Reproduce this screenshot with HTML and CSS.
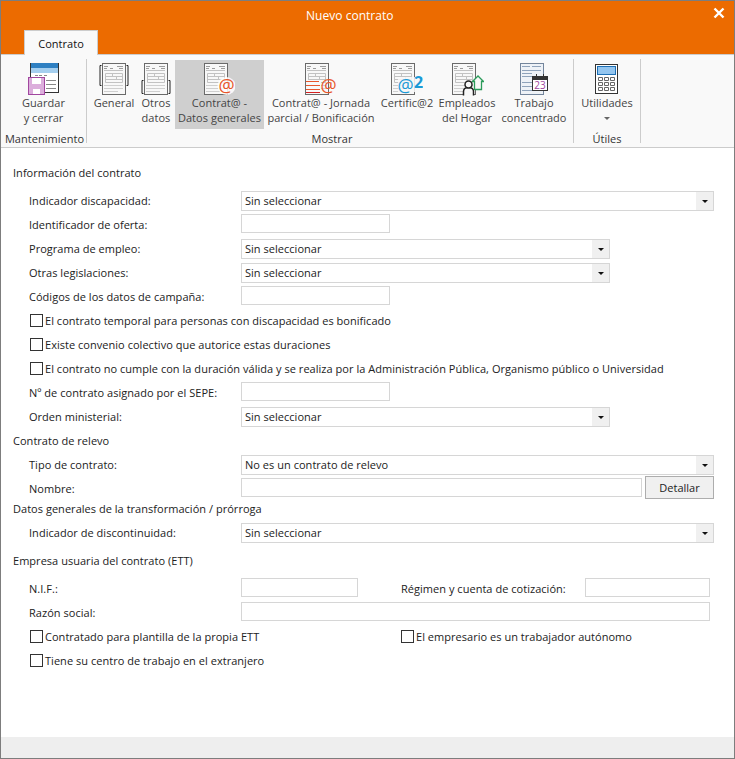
FILE: index.html

```html
<!DOCTYPE html>
<html lang="es">
<head>
  <meta charset="UTF-8">
  <title>Nuevo contrato</title>
  <link rel="stylesheet" href="styles.css">
</head>
<body>

  <svg class="defs" width="0" height="0">
    <symbol id="doc" viewBox="0 0 24 32">
      <rect x="0.5" y="0.5" width="23" height="31" fill="#f8f8f8" stroke="#6a6a6a"/>
      <path d="M2 3.5h4M15 3.5h6M2 5.500h3M8 5.500h3M17 5.500h4" stroke="#9c9c9c" fill="none"/>
      <path d="M2 7.500h19M3.500 10.500h17v9h-17zM3.500 13.500h17M3.500 16.500h17M10.500 10.500v3M14.500 13.500v3" stroke="#c2c2c2" fill="none"/>
      <path d="M2 22.500h19M2 25.500h19M2 28.500h14" stroke="#cfcfcf" fill="none"/>
    </symbol>
  </svg>

  <div class="window">
    <div class="titlebar">
      <span class="title">Nuevo contrato</span>
      <svg class="close" width="12" height="12" viewBox="0 0 12 12"><path d="M1.5 1.500l9 9M10.500 1.500l-9 9" stroke="#fff" stroke-width="2.400"/></svg>
    </div>
    <div class="tabs">
      <div class="tab">Contrato</div>
    </div>

    <div class="ribbon">
      <div class="group group-save">
        <div class="group-buttons">
          <div class="rbtn w-save">
            <svg width="33" height="34" viewBox="-1 0 33 34">
              <rect x="2.500" y="1.500" width="28" height="29" fill="#fff" stroke="#333"/>
              <rect x="3" y="1" width="27" height="5" fill="#2f80c2"/>
              <rect x="3" y="6" width="27" height="5" fill="#a5cfef"/>
              <path d="M7 13.500h3M11 13.500h3M16 13.500h3M18 18.500h10M18 22.500h10M18 26.500h10" stroke="#888"/>
              <rect x="0.500" y="15.500" width="16" height="17" fill="#dcaedc" stroke="#a1479f"/>
              <rect x="4" y="16" width="9" height="6" fill="#fff"/>
              <rect x="5" y="27" width="7" height="5" fill="#fff"/>
            </svg>
            <span>Guardar<br>y cerrar</span>
          </div>
        </div>
        <div class="group-label">Mantenimiento</div>
      </div>

      <div class="group group-show">
        <div class="group-buttons">
          <div class="rbtn w-general">
            <svg width="30" height="34" viewBox="0 0 30 34">
              <use href="#doc" x="3" y="1" width="24" height="32"/>
              <path d="M2.500 3.500h-1.500v20h1.500M27.500 3.500h1.500v20h-1.500" stroke="#222" fill="none"/>
            </svg>
            <span>General</span>
          </div>
          <div class="rbtn w-otros">
            <svg width="30" height="34" viewBox="0 0 30 34">
              <use href="#doc" x="3" y="1" width="24" height="32"/>
              <path d="M2.500 18.500h-1.500v13h1.500M27.500 18.500h1.500v13h-1.500" stroke="#222" fill="none"/>
            </svg>
            <span>Otros<br>datos</span>
          </div>
          <div class="rbtn w-datos active">
            <svg width="31" height="34" viewBox="0 0 31 34">
              <use href="#doc" x="0" y="1" width="24" height="32"/>
              <circle cx="22.500" cy="24" r="9" fill="#fff" fill-opacity="0.850"/>
              <text class="at" x="14.500" y="29.500" fill="#e8562a">@</text>
            </svg>
            <span>Contrat@ -<br>Datos generales</span>
          </div>
          <div class="rbtn w-jornada">
            <svg width="32" height="34" viewBox="0 0 32 34">
              <use href="#doc" x="0" y="1" width="24" height="32"/>
              <rect x="1" y="18" width="15" height="14" fill="#f8f8f8"/>
              <path d="M1 19.500h13M1 23.500h14M1 27.500h14" stroke="#e8562a"/>
              <path d="M1 30.500h14" stroke="#d42020"/>
              <text class="at" x="15.500" y="29.500" fill="#e8562a">@</text>
            </svg>
            <span>Contrat@ - Jornada<br>parcial / Bonificación</span>
          </div>
          <div class="rbtn w-certifica">
            <svg width="32" height="34" viewBox="0 0 32 34">
              <use href="#doc" x="0" y="1" width="24" height="32"/>
              <rect x="7" y="15" width="24" height="15" fill="#f8f8f8" fill-opacity="0.850"/>
              <text class="at" x="6.500" y="29.500" fill="#1b9ad6">@</text>
              <text class="two" x="23" y="26" fill="#1b9ad6">2</text>
            </svg>
            <span>Certific@2</span>
          </div>
          <div class="rbtn w-hogar">
            <svg width="34" height="34" viewBox="-2 0 34 34">
              <use href="#doc" x="0" y="1" width="24" height="32"/>
              <path d="M20.500 19.500l5.500-5.500 5.500 5.500h-2v8h-7v-8z" fill="#f8f8f8" stroke="#2c9b5a" stroke-width="1.300"/>
              <path d="M11.500 33.500v-4c0-3 2-4 5-4s5 1 5 4v4" fill="#f8f8f8" stroke="#222" stroke-width="1.500"/>
              <circle cx="16.500" cy="22.500" r="3.500" fill="#f8f8f8" stroke="#222" stroke-width="1.500"/>
            </svg>
            <span>Empleados<br>del Hogar</span>
          </div>
          <div class="rbtn w-trabajo">
            <svg width="30" height="34" viewBox="-1 0 30 34">
              <rect x="0.500" y="1.500" width="23" height="31" fill="#eef2f7" stroke="#73859c"/>
              <path d="M2 4.500h8M12 4.500h9M2 8.500h19M2 11.500h10M2 14.500h10M2 20.500h10M2 24.500h19M2 28.500h19" stroke="#8fa3bb"/>
              <rect x="12.500" y="14.500" width="15" height="14" fill="#fff" stroke="#333"/>
              <rect x="12" y="14" width="16" height="4" fill="#333"/>
              <path d="M16.500 12v3M23.500 12v3" stroke="#333"/>
              <text class="cal" x="20" y="27" fill="#a1479f">23</text>
            </svg>
            <span>Trabajo<br>concentrado</span>
          </div>
        </div>
        <div class="group-label">Mostrar</div>
      </div>

      <div class="group group-tools">
        <div class="group-buttons">
          <div class="rbtn w-utils">
            <svg width="24" height="34" viewBox="0 0 24 34">
              <rect x="0.500" y="2.500" width="22" height="29" fill="#fff" stroke="#333"/>
              <rect x="2.500" y="4.500" width="18" height="8" fill="#93c5ef" stroke="#1c6fb5"/>
              <path d="M3.500 15.500h4v3h-4zM9.500 15.500h4v3h-4zM15.500 15.500h4v3h-4zM3.500 20.500h4v3h-4zM9.500 20.500h4v3h-4zM15.500 20.500h4v3h-4zM3.500 25.500h4v3h-4zM9.500 25.500h4v3h-4zM15.500 25.500h4v3h-4z" fill="none" stroke="#666"/>
            </svg>
            <span>Utilidades</span>
            <i class="ribbon-arrow"></i>
          </div>
        </div>
        <div class="group-label">Útiles</div>
      </div>
    </div>

    <div class="content">
      <div class="section first">Información del contrato</div>

      <div class="row"><label>Indicador discapacidad:</label>
        <div class="select full"><span>Sin seleccionar</span><i></i></div></div>
      <div class="row"><label>Identificador de oferta:</label>
        <input type="text" class="input short"></div>
      <div class="row"><label>Programa de empleo:</label>
        <div class="select mid"><span>Sin seleccionar</span><i></i></div></div>
      <div class="row"><label>Otras legislaciones:</label>
        <div class="select mid"><span>Sin seleccionar</span><i></i></div></div>
      <div class="row"><label>Códigos de los datos de campaña:</label>
        <input type="text" class="input short"></div>
      <div class="check-row"><input type="checkbox" class="check"><span>El contrato temporal para personas con discapacidad es bonificado</span></div>
      <div class="check-row"><input type="checkbox" class="check"><span>Existe convenio colectivo que autorice estas duraciones</span></div>
      <div class="check-row"><input type="checkbox" class="check"><span>El contrato no cumple con la duración válida y se realiza por la Administración Pública, Organismo público o Universidad</span></div>
      <div class="row"><label>Nº de contrato asignado por el SEPE:</label>
        <input type="text" class="input short"></div>
      <div class="row"><label>Orden ministerial:</label>
        <div class="select mid"><span>Sin seleccionar</span><i></i></div></div>

      <div class="section">Contrato de relevo</div>
      <div class="row"><label>Tipo de contrato:</label>
        <div class="select full"><span>No es un contrato de relevo</span><i></i></div></div>
      <div class="row"><label>Nombre:</label>
        <input type="text" class="input name">
        <button class="btn">Detallar</button></div>

      <div class="section tight">Datos generales de la transformación / prórroga</div>
      <div class="row"><label>Indicador de discontinuidad:</label>
        <div class="select full"><span>Sin seleccionar</span><i></i></div></div>

      <div class="section spaced">Empresa usuaria del contrato (ETT)</div>
      <div class="row"><label>N.I.F.:</label>
        <input type="text" class="input nif">
        <label class="label-regimen">Régimen y cuenta de cotización:</label>
        <input type="text" class="input regimen"></div>
      <div class="row"><label>Razón social:</label>
        <input type="text" class="input social"></div>
      <div class="check-row">
        <div class="check-half"><input type="checkbox" class="check"><span>Contratado para plantilla de la propia ETT</span></div>
        <div class="check-half"><input type="checkbox" class="check"><span>El empresario es un trabajador autónomo</span></div>
      </div>
      <div class="check-row"><input type="checkbox" class="check"><span>Tiene su centro de trabajo en el extranjero</span></div>
    </div>

    <div class="footer"></div>
  </div>

</body>
</html>
```

FILE: styles.css

```css
* { box-sizing: border-box; }
html, body { margin: 0; height: 100%; }
body {
  font-family: "Open Sans", "Noto Sans", sans-serif;
  font-size: 11px;
  letter-spacing: 0.03px;
  color: #222;
  background: #fff;
}
.defs { position: absolute; }
.window {
  height: 759px;
  display: flex;
  flex-direction: column;
  border: 1px solid #7d7d7d;
}

/* title */
.titlebar {
  height: 29px;
  background: #ec6b00;
  color: #fff;
  display: flex;
  justify-content: space-between;
  padding: 6px 9px 0 305px;
}
.title { font-size: 12px; line-height: 18px; }
.tabs {
  height: 24px;
  background: #ec6b00;
  padding-left: 23px;
}
.tab {
  position: relative;
  width: 74px;
  height: 25px;
  background: #f9f9f9;
  border: 1px solid #ccc;
  border-bottom: none;
  text-align: center;
  line-height: 25px;
  color: #111;
}

/* ribbon */
.ribbon {
  height: 94px;
  display: flex;
  padding-top: 4px;
  background: #f9f9f9;
  border-top: 1px solid #ccc;
  border-bottom: 1px solid #ccc;
}
.group {
  height: 84px;
  display: flex;
  flex-direction: column;
  border-right: 1px solid #ccc;
}
.group-save { width: 86px; }
.group-show { width: 487px; padding-left: 4px; }
.group-tools { width: 67px; }
.group-buttons { display: flex; height: 69px; margin-top: 1px; }
.group-label {
  padding-top: 3px;
  text-align: center;
  line-height: 14px;
  color: #333;
}
.group-save .group-label { padding-left: 2px; }
.rbtn {
  height: 69px;
  padding-top: 2px;
  display: flex;
  flex-direction: column;
  align-items: center;
  text-align: center;
  line-height: 15px;
  color: #444;
  white-space: nowrap;
}
.rbtn svg { display: block; flex: none; }
.rbtn span { margin-top: -1px; }
.rbtn.active { background: #cfcfcf; }
.w-save { width: 85px; }
.w-general { width: 46px; }
.w-otros { width: 38px; }
.w-datos { width: 89px; }
.w-jornada { width: 114px; }
.w-certifica { width: 58px; }
.w-hogar { width: 62px; }
.w-trabajo { width: 72px; }
.w-utils { width: 66px; }
.ribbon-arrow {
  margin-top: 7px;
  border: 3px solid transparent;
  border-top: 3px solid #666;
  border-bottom: none;
}
.at { font-family: "Open Sans", sans-serif; font-size: 18px; }
.two { font-family: "Open Sans", sans-serif; font-size: 16px; font-weight: 700; }
.cal { font-family: "Open Sans", sans-serif; font-size: 10px; text-anchor: middle; }

/* form */
.content {
  flex: 1;
  padding: 13px 20px 0 12px;
  background: #fff;
}
.section { height: 24px; line-height: 24px; }
.section.first { margin-bottom: 4px; }
.section.tight { height: 16px; line-height: 16px; margin-bottom: 4px; }
.section.spaced { margin-top: 4px; margin-bottom: 4px; }
.row, .check-row {
  height: 24px;
  display: flex;
  align-items: center;
  padding-left: 16px;
}
.row label, .check-row span { margin-bottom: 2px; }
.row > label:first-child { width: 212px; flex: none; }
.select {
  height: 20px;
  display: flex;
  justify-content: space-between;
  border: 1px solid #d6d6d6;
  background: #fff;
}
.select span { line-height: 17px; padding-left: 3px; }
.select i {
  width: 17px;
  background: #f0f0f0;
  display: flex;
  align-items: center;
  justify-content: center;
}
.select i::after {
  content: "";
  border: 3px solid transparent;
  border-top: 3px solid #111;
  border-bottom: none;
}
.full { width: 473px; }
.mid { width: 369px; }
.input {
  height: 19px;
  margin: 0 0 3px;
  padding: 0 3px;
  border: 1px solid #d6d6d6;
  background: #fff;
  outline: none;
}
.short { width: 149px; }
.name { width: 401px; }
.nif { width: 117px; }
.regimen { width: 125px; }
.social { width: 469px; }
.label-regimen { margin-left: 43px; width: 184px; flex: none; }
.btn {
  width: 69px;
  height: 23px;
  margin: 0 0 3px 3px;
  padding: 0;
  font: inherit;
  color: #222;
  background: #f0f0f0;
  border: 1px solid #adadad;
  border-radius: 0;
}
.check {
  appearance: none;
  width: 13px;
  height: 13px;
  margin: 0 2px 1px 1px;
  flex: none;
  border: 1px solid #333;
  border-radius: 0;
  background: #fff;
}
.check-half {
  display: flex;
  align-items: center;
}
.check-half:first-child { flex: 0 0 371px; }

.footer {
  height: 21px;
  background: #eee;
}
```
